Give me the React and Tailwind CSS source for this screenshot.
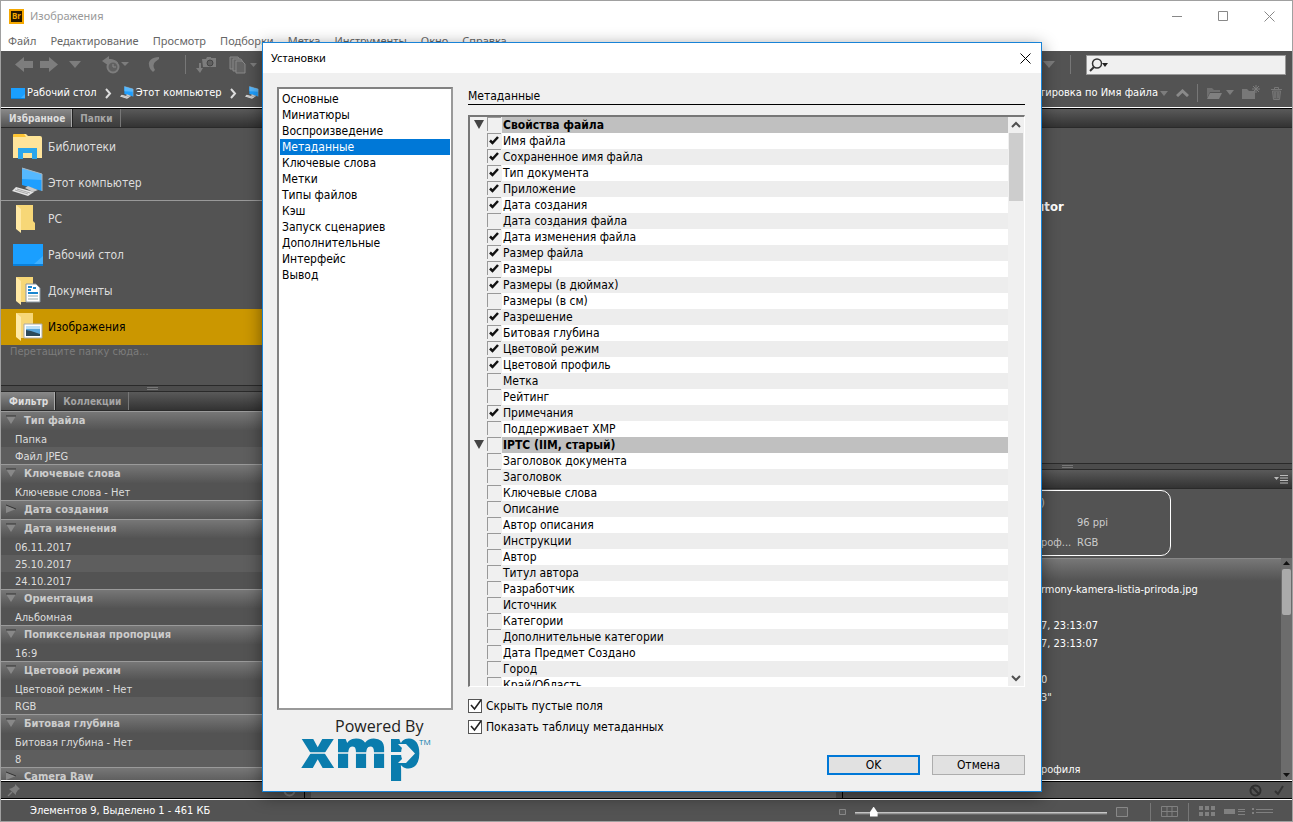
import React, { useState } from "react";

const menu = ["Файл", "Редактирование", "Просмотр", "Подборки", "Метка", "Инструменты", "Окно", "Справка"];

const filters = [
  { title: "Тип файла", open: true, items: ["Папка", "Файл JPEG"] },
  { title: "Ключевые слова", open: true, items: ["Ключевые слова - Нет"] },
  { title: "Дата создания", open: false, items: [] },
  { title: "Дата изменения", open: true, items: ["06.11.2017", "25.10.2017", "24.10.2017"] },
  { title: "Ориентация", open: true, items: ["Альбомная"] },
  { title: "Попиксельная пропорция", open: true, items: ["16:9"] },
  { title: "Цветовой режим", open: true, items: ["Цветовой режим - Нет", "RGB"] },
  { title: "Битовая глубина", open: true, items: ["Битовая глубина - Нет", "8"] },
  { title: "Camera Raw", open: false, items: [] },
];

const sections = [
  "Основные",
  "Миниатюры",
  "Воспроизведение",
  "Метаданные",
  "Ключевые слова",
  "Метки",
  "Типы файлов",
  "Кэш",
  "Запуск сценариев",
  "Дополнительные",
  "Интерфейс",
  "Вывод",
];

const fields = [
  { name: "Свойства файла", head: true },
  { name: "Имя файла", on: true },
  { name: "Сохраненное имя файла", on: true },
  { name: "Тип документа", on: true },
  { name: "Приложение", on: true },
  { name: "Дата создания", on: true },
  { name: "Дата создания файла" },
  { name: "Дата изменения файла", on: true },
  { name: "Размер файла", on: true },
  { name: "Размеры", on: true },
  { name: "Размеры (в дюймах)", on: true },
  { name: "Размеры (в см)" },
  { name: "Разрешение", on: true },
  { name: "Битовая глубина", on: true },
  { name: "Цветовой режим", on: true },
  { name: "Цветовой профиль", on: true },
  { name: "Метка" },
  { name: "Рейтинг" },
  { name: "Примечания", on: true },
  { name: "Поддерживает XMP" },
  { name: "IPTC (IIM, старый)", head: true },
  { name: "Заголовок документа" },
  { name: "Заголовок" },
  { name: "Ключевые слова" },
  { name: "Описание" },
  { name: "Автор описания" },
  { name: "Инструкции" },
  { name: "Автор" },
  { name: "Титул автора" },
  { name: "Разработчик" },
  { name: "Источник" },
  { name: "Категории" },
  { name: "Дополнительные категории" },
  { name: "Дата Предмет Создано" },
  { name: "Город" },
  { name: "Край/Область" },
];

// empty strings are blank rows in the properties list
const props = ["rmony-kamera-listia-priroda.jpg", "", "7, 23:13:07", "7, 23:13:07", "", "0", '3"', "", "", "", "рофиля"];

/* ---------- icons ---------- */

function Down({ className }) {
  return (
    <svg className={className} width="12" height="7" viewBox="0 0 12 7">
      <path d="M0 0h12L6 7z" fill="#7d7d7d" />
    </svg>
  );
}

function SmallDown() {
  return (
    <svg width="8" height="5" viewBox="0 0 8 5">
      <path d="M0 0h8L4 5z" fill="#7d7d7d" />
    </svg>
  );
}

function Chevron() {
  return (
    <svg width="7" height="11" viewBox="0 0 7 11">
      <path d="M1 1l4 4.5L1 10" fill="none" stroke="#ddd" strokeWidth="2" />
    </svg>
  );
}

function Monitor({ size }) {
  return (
    <svg width={size} height={size} viewBox="0 0 32 32">
      <path d="M10 1l20 6v17l-20-6z" fill="#1e9fff" />
      <path d="M10 1l20 6v6L10 12z" fill="#55b8ff" />
      <path d="M10 1l20 6v17" fill="none" stroke="#a9b5bd" />
      <path d="M16 19l10 4-5 2-8-4z" fill="#c9c9c9" />
      <path d="M4 20l18 5-6 4L0 24z" fill="#e4e4e4" />
      <path d="M5 22l13 4M3 23l13 4" stroke="#aaa" fill="none" />
    </svg>
  );
}

function Folder({ children }) {
  return (
    <svg width="32" height="32" viewBox="0 0 32 32">
      <path d="M4 2h17v16l2 2v7H9z" fill="#f7d777" />
      <path d="M4 2l5 4v24l-5-4z" fill="#ffe9a4" />
      {children}
    </svg>
  );
}

function Libraries() {
  return (
    <svg width="32" height="32" viewBox="0 0 32 32">
      <path d="M1 4a2 2 0 012-1h11l2 2h12a2 2 0 012 2v18H1z" fill="#ffe698" />
      <path d="M1 4a2 2 0 012-1h9l2 3H1z" fill="#ffc533" />
      <path d="M1 8h29v19H1z" fill="#ffe49b" />
      <path d="M6 17h19v11h-5v-6h-9v6H6z" fill="#2ba6ec" />
    </svg>
  );
}

function Desktop({ className }) {
  return (
    <svg className={className} viewBox="0 0 30 22" preserveAspectRatio="none">
      <rect width="30" height="22" fill="#1a9fff" />
      <path d="M0 21h30" stroke="#0b7fd8" strokeWidth="2" />
      <path d="M30 12v8H21z" fill="#3fb0ff" />
    </svg>
  );
}

const favourites = [
  { name: "Библиотеки", icon: <Libraries /> },
  { name: "Этот компьютер", icon: <Monitor size={32} /> },
  { name: "PC", icon: <Folder /> },
  { name: "Рабочий стол", icon: <Desktop className="h-[22px] w-[30px]" /> },
  {
    name: "Документы",
    icon: (
      <Folder>
        <path d="M14 9h10l4 4v14H14z" fill="#fff" stroke="#8b98a3" />
        <path d="M16 15h3M21 13h3M16 18h10M16 12h4" stroke="#1a86d0" strokeWidth="2" />
        <path d="M16 21h10M16 24h10" stroke="#9aa" />
      </Folder>
    ),
  },
  {
    name: "Изображения",
    icon: (
      <Folder>
        <path d="M12 13h18v14H12z" fill="#fff" stroke="#aaa" />
        <path d="M14 15h14v10H14z" fill="#5aa7dd" />
        <path d="M14 15h14v3H14z" fill="#bfe0f5" />
        <path d="M14 19l5 1 9 3v2H14z" fill="#2c4a5c" />
      </Folder>
    ),
  },
];

/* ---------- shared bits ---------- */

function Strip({ children }) {
  return (
    <div className="flex h-[19px] shrink-0 border-b border-[#2a2a2a] bg-linear-to-b from-[#5a5a5a] to-[#333]">{children}</div>
  );
}

function Tab({ children, active }) {
  return (
    <button
      className={
        active
          ? "border-r border-[#aaa] bg-linear-to-b from-[#8a8a8a] to-[#545454] pr-[6px] pl-2 text-[10px] font-bold text-[#ddd]"
          : "border-r border-l border-r-[#777] border-l-[#222] bg-linear-to-b from-[#555] to-[#3c3c3c] px-[7px] text-[10px] font-bold text-[#a5a5a5]"
      }
    >
      {children}
    </button>
  );
}

function Splitter() {
  return (
    <div className="flex h-[7px] shrink-0 items-center justify-center border-y border-[#2a2a2a] bg-[#4c4c4c]">
      <span className="h-[3px] w-[11px] border-y border-[#777]" />
    </div>
  );
}

function FilterGroup({ group }) {
  const [open, setOpen] = useState(group.open);
  return (
    <div>
      <button
        onClick={() => setOpen(!open)}
        className="flex h-[19px] w-full items-center border-t border-[#9a9a9a] bg-linear-to-b from-[#777] to-[#545454] pt-px pl-[5px] text-[11px] font-bold text-[#ccc]"
      >
        <svg width="10" height="10" viewBox="0 0 10 10" className="mr-2 mb-1">
          {open ? (
            <>
              <path d="M0 1h10L5 9z" fill="#888" />
              <path d="M0 1h10" stroke="#333" />
            </>
          ) : (
            <>
              <path d="M0 1l10 4-10 4z" fill="#888" />
              <path d="M0 1l10 4" stroke="#333" />
            </>
          )}
        </svg>
        {group.title}
      </button>
      {open &&
        group.items.map((item, i) => (
          <div
            key={item}
            className={`h-[17px] pt-px pl-[14px] text-[11px] leading-[17px] text-[#ddd] ${i % 2 ? "bg-[#5e5e5e]" : "bg-[#535353]"}`}
          >
            {item}
          </div>
        ))}
    </div>
  );
}

function FieldRow({ field, index }) {
  let bg = index % 2 ? "bg-white" : "bg-[#ededed]";
  if (field.head) bg = "bg-[#c0c0c0] font-bold";
  return (
    <label className="flex h-4">
      <span className="flex w-[17px] shrink-0 justify-center pt-[3px]">
        {field.head && (
          <svg width="10" height="9" viewBox="0 0 10 9">
            <path d="M0 0h10L5 9z" fill="#444" />
          </svg>
        )}
      </span>
      <span className="grid w-[15px] shrink-0">
        <input
          type="checkbox"
          defaultChecked={field.on}
          className="peer col-start-1 row-start-1 h-[14px] w-[14px] appearance-none border-t border-l border-[#999] bg-[#f0f0f0]"
        />
        <svg
          className="pointer-events-none col-start-1 row-start-1 hidden peer-checked:block"
          width="14"
          height="14"
          viewBox="0 0 14 14"
        >
          <path d="M3 7.500l2.500 2.500L11 4" fill="none" stroke="#111" strokeWidth="2.500" />
        </svg>
      </span>
      <span className={`flex-1 pl-px leading-4 whitespace-nowrap ${bg}`}>{field.name}</span>
    </label>
  );
}

function Option({ children }) {
  return (
    <label className="flex h-[21px] items-center gap-1">
      <span className="grid">
        <input
          type="checkbox"
          defaultChecked
          className="peer col-start-1 row-start-1 h-[14px] w-[14px] appearance-none border border-[#555] bg-white"
        />
        <svg
          className="pointer-events-none col-start-1 row-start-1 hidden overflow-visible peer-checked:block"
          width="14"
          height="14"
          viewBox="0 0 14 14"
        >
          <path d="M3 6l3.500 4L13 1" fill="none" stroke="#222" strokeWidth="1.600" />
        </svg>
      </span>
      {children}
    </label>
  );
}

/* ---------- preferences window ---------- */

function Preferences() {
  const [section, setSection] = useState("Метаданные");

  return (
    <div
      role="dialog"
      aria-label="Установки"
      className="absolute top-[41px] left-[261px] flex h-[750px] w-[780px] flex-col border border-[#1883d7] bg-[#f0f0f0] text-xs text-black shadow-[0_4px_16px_rgba(0,0,0,0.45)]"
    >
      <div className="flex h-[30px] shrink-0 items-center justify-between bg-white pr-[10px] pl-2 font-['Noto_Sans',sans-serif] text-[11px]">
        <span>Установки</span>
        <button aria-label="Закрыть">
          <svg width="11" height="11" viewBox="0 0 11 11">
            <path d="M.5.5l10 10M10.500.5l-10 10" stroke="#000" fill="none" />
          </svg>
        </button>
      </div>

      <div className="flex min-h-0 flex-1 gap-[15px] pt-[14px] pr-4 pb-4 pl-[14px]">
        <div className="flex w-[176px] shrink-0 flex-col">
          <ul className="h-[623px] shrink-0 border-2 border-[#828282] border-r-[#999] border-b-[#999] bg-white px-px pt-[2px]">
            {sections.map((s) => (
              <li key={s}>
                <button
                  onClick={() => setSection(s)}
                  className={`block h-4 w-full pl-[2px] text-left leading-4 ${s === section ? "bg-[#0078d7] text-white" : ""}`}
                >
                  {s}
                </button>
              </li>
            ))}
          </ul>
          <svg className="mt-1 ml-6 shrink-0 overflow-visible" width="130" height="60" viewBox="0 0 130 60">
            <text x="34" y="18" fontFamily="Open Sans, sans-serif" fontSize="16" fill="#222">
              Powered By
            </text>
            <text x="0" y="54" fontFamily="Open Sans, sans-serif" fontWeight="800" fontSize="53" fill="#0a7cad">
              xmp
            </text>
            <path d="M0 39h88" stroke="#f0f0f0" strokeWidth="1.500" />
            <path d="M87 38h18l-8-8h8l9 9.500-9 9.500h-8l8-8H87z" fill="#f0f0f0" />
            <text x="118" y="31" fontFamily="Open Sans, sans-serif" fontSize="8" fill="#0a7cad">
              TM
            </text>
          </svg>
        </div>

        <div className="flex min-w-0 flex-1 flex-col">
          <h2 className="h-[18px] border-b border-black pt-px leading-4">{section}</h2>
          <div className="mt-[10px] flex h-[572px] shrink-0 overflow-hidden border-t-2 border-l-2 border-r border-b border-t-[#777] border-r-white border-b-white border-l-[#777]">
            <div className="min-w-0 flex-1">
              {fields.map((f, i) => (
                <FieldRow key={i} field={f} index={i} />
              ))}
            </div>
            <div className="flex w-4 shrink-0 flex-col items-center">
              <svg className="shrink-0" width="16" height="16" viewBox="0 0 16 16">
                <path d="M4 10l4-4 4 4" fill="none" stroke="#505050" strokeWidth="2" />
              </svg>
              <span className="h-[68px] w-[14px] bg-[#cdcdcd]" />
              <svg className="mt-auto shrink-0" width="16" height="16" viewBox="0 0 16 16">
                <path d="M4 6l4 4 4-4" fill="none" stroke="#505050" strokeWidth="2" />
              </svg>
            </div>
          </div>
          <div className="mt-2">
            <Option>Скрыть пустые поля</Option>
            <Option>Показать таблицу метаданных</Option>
          </div>
          <div className="mt-auto flex justify-end gap-3">
            <button className="h-5 w-[93px] border-2 border-[#0078d7] bg-[#e1e1e1] leading-4">OK</button>
            <button className="h-5 w-[93px] border border-[#adadad] bg-[#e1e1e1] leading-4">Отмена</button>
          </div>
        </div>
      </div>
    </div>
  );
}

/* ---------- main window ---------- */

function Header() {
  return (
    <header className="bg-white font-['Noto_Sans',sans-serif] text-[11px]">
      <div className="flex h-[30px] items-center pr-[17px] pl-2 text-[#999]">
        <span className="mr-[6px] flex h-[15px] w-[15px] items-center justify-center border-2 border-[#f5a800] bg-[#261a00] text-[8px] font-bold text-[#f5a800]">
          Br
        </span>
        <span className="flex-1">Изображения</span>
        <button aria-label="Свернуть">
          <svg width="10" height="10" viewBox="0 0 10 10">
            <path d="M0 5.500h10" stroke="#888" />
          </svg>
        </button>
        <button aria-label="Развернуть" className="mx-9">
          <svg width="10" height="10" viewBox="0 0 10 10">
            <path d="M.5.5h9v9h-9z" fill="none" stroke="#888" />
          </svg>
        </button>
        <button aria-label="Закрыть">
          <svg width="11" height="11" viewBox="0 0 11 11">
            <path d="M.5.5l10 10M10.500.5l-10 10" stroke="#888" fill="none" />
          </svg>
        </button>
      </div>
      <nav className="flex h-5 items-center gap-[14px] pl-[7px] text-[#666]">
        {menu.map((m) => (
          <button key={m}>{m}</button>
        ))}
      </nav>
    </header>
  );
}

function Toolbar() {
  return (
    <div className="shrink-0 border-b border-black">
      <div className="flex h-[27px] items-center pr-[6px] pl-[14px]">
        <svg width="18" height="15" viewBox="0 0 18 15">
          <path d="M0 7.500L9 0v4h9v7H9v4z" fill="#7d7d7d" />
        </svg>
        <svg className="ml-[7px]" width="18" height="15" viewBox="0 0 18 15">
          <path d="M18 7.500L9 0v4H0v7h9v4z" fill="#7d7d7d" />
        </svg>
        <Down className="ml-[11px]" />
        <svg className="ml-[21px]" width="27" height="18" viewBox="0 0 27 18">
          <path d="M0 5l7-5v3c5 0 8 2 9 4l-3 1c-2-2-4-2-6-1v3z" fill="#7d7d7d" />
          <circle cx="11" cy="11" r="5.500" fill="#606060" stroke="#7d7d7d" strokeWidth="2" />
          <path d="M11 8v3h3" stroke="#8a8a8a" fill="none" />
          <path d="M19 6h8l-4 4z" fill="#7d7d7d" />
        </svg>
        <svg className="ml-[19px]" width="12" height="17" viewBox="0 0 12 17">
          <path d="M11 1C4 1 0 5 1 9c0 3 2 5 4 7l2-2C5 11 5 8 7 6l4-3z" fill="#7d7d7d" />
        </svg>
        <span className="mr-[10px] ml-[25px] h-[19px] w-px bg-[#777]" />
        <svg width="21" height="17" viewBox="0 0 21 17">
          <path d="M3 7h2v5h2l-3 5-4-5h3z" fill="#7d7d7d" />
          <path d="M6 3h4l1-2h4v1h5v9H7z" fill="#7d7d7d" />
          <circle cx="14" cy="7" r="3" fill="#606060" stroke="#444" />
        </svg>
        <svg className="ml-3" width="29" height="18" viewBox="0 0 29 18">
          <path d="M1 1h8l2 3v9H1z" fill="#646464" stroke="#888" />
          <path d="M4 3h8l2 3v9H4z" fill="#646464" stroke="#888" />
          <path d="M7 5h6l3 3v9H7z" fill="#646464" stroke="#888" />
          <path d="M21 7h7l-3.500 4z" fill="#7d7d7d" />
        </svg>
        <span className="flex-1" />
        <Down />
        <span className="mx-[15px] h-[19px] w-px bg-[#777]" />
        <label className="flex h-5 w-[200px] items-center border border-[#999] bg-[#f0f0f0] pl-[2px]">
          <svg width="20" height="14" viewBox="0 0 20 14">
            <circle cx="8" cy="5.500" r="4.500" fill="none" stroke="#333" strokeWidth="1.500" />
            <path d="M5 9l-4 4" stroke="#333" strokeWidth="2" />
            <path d="M13 5h6l-3 4z" fill="#222" />
          </svg>
          <input type="text" aria-label="Поиск" className="min-w-0 flex-1 outline-none" />
        </label>
      </div>

      <div className="flex h-[30px] items-center border-b border-white px-[10px] pt-px text-[11px] text-white">
        <Desktop className="h-[11px] w-[14px]" />
        <span className="ml-[2px]">Рабочий стол</span>
        <span className="mr-2 ml-2">
          <Chevron />
        </span>
        <Monitor size={14} />
        <span className="ml-[2px]">Этот компьютер</span>
        <span className="mr-2 ml-2">
          <Chevron />
        </span>
        <Monitor size={14} />
        <span className="flex-1" />
        <button className="mr-[2px]">Сортировка по Имя файла</button>
        <SmallDown />
        <svg className="mx-2" width="13" height="8" viewBox="0 0 13 8">
          <path d="M1 7l5.500-5L12 7" fill="none" stroke="#8a8a8a" strokeWidth="3" />
        </svg>
        <span className="mr-2 h-[18px] w-px bg-[#777]" />
        <svg width="28" height="14" viewBox="0 0 28 14">
          <path d="M1 12V2h5l2 2h6v2H4z" fill="#6f6f6f" />
          <path d="M4 7h12l-3 6H1z" fill="#808080" />
          <path d="M20 4h8l-4 5z" fill="#7d7d7d" />
        </svg>
        <svg className="ml-2" width="18" height="16" viewBox="0 0 18 16">
          <path d="M0 14V4h5l2 2h6v8z" fill="#787878" />
          <path d="M14 0v8M10 4h8M11 1l6 6M17 1l-6 6" stroke="#7d7d7d" />
        </svg>
        <svg className="ml-[11px]" width="11" height="13" viewBox="0 0 11 13">
          <path d="M0 2.500h11M3.500 2V.5h4V2" stroke="#777" fill="none" />
          <path d="M1.500 4h8l-1 8.500h-6z" fill="#606060" stroke="#777" />
          <path d="M4 5v6M7 5v6" stroke="#7d7d7d" />
        </svg>
      </div>
    </div>
  );
}

function LeftPanel() {
  return (
    <div className="flex w-[304px] shrink-0 flex-col border-r border-[#222]">
      <Strip>
        <Tab active>Избранное</Tab>
        <Tab>Папки</Tab>
      </Strip>
      <div className="min-h-0 flex-1 overflow-hidden pt-px text-xs text-[#ddd]">
        {favourites.map((f, i) => (
          <a
            key={f.name}
            href="#"
            className={`flex h-9 items-center gap-1 pl-[11px] ${i === 1 ? "border-b border-[#999]" : ""} ${
              i === 5 ? "bg-[#cb9700] text-black" : ""
            }`}
          >
            <span className="flex w-8 justify-center">{f.icon}</span>
            {f.name}
          </a>
        ))}
        <p className="pl-[9px] text-[11px] leading-[14px] text-[#7c7c7c]">Перетащите папку сюда...</p>
      </div>
      <Splitter />
      <Strip>
        <Tab active>Фильтр</Tab>
        <Tab>Коллекции</Tab>
      </Strip>
      <div className="h-[369px] shrink-0 overflow-hidden">
        {filters.map((g) => (
          <FilterGroup key={g.title} group={g} />
        ))}
      </div>
    </div>
  );
}

function RightPanel() {
  return (
    <div className="flex w-[450px] shrink-0 flex-col border-l border-[#222]">
      <Strip />
      <div className="flex-1 pt-[69px] pl-[193px] text-[13px] font-bold text-white">utor</div>
      <Splitter />
      <Strip>
        <svg className="mt-[5px] mr-1 ml-auto" width="14" height="9" viewBox="0 0 14 9">
          <path d="M0 2h5L2.500 5z" fill="#bbb" />
          <path d="M6 .5h8M6 3h8M6 5.500h8M6 8h8" stroke="#bbb" />
        </svg>
      </Strip>
      <div className="h-[69px] shrink-0 pt-px pl-1 text-[11px] text-[#ccc]">
        <div className="grid h-[66px] w-[324px] grid-cols-[193px_36px_1fr] content-center rounded-[10px] border border-white leading-5">
          <span className="col-start-2 row-start-1">)</span>
          <span className="col-start-3 row-start-2">96 ppi</span>
          <span className="col-start-2 row-start-3">роф...</span>
          <span className="col-start-3 row-start-3">RGB</span>
        </div>
      </div>
      <div className="flex h-[222px] shrink-0">
        <div className="flex-1 border-t border-[#888]">
          <div className="h-[22px] bg-linear-to-b from-[#777] to-[#535353]" />
          {props.map((p, i) => (
            <div key={i} className="h-[18px] pl-[198px] text-[11px] leading-[18px] text-white">
              {p}
            </div>
          ))}
        </div>
        <div className="flex w-[11px] flex-col items-center bg-[#6c6c6c]">
          <svg className="mt-[3px]" width="7" height="4" viewBox="0 0 7 4">
            <path d="M0 4h7L3.500 0z" fill="#111" />
          </svg>
          <span className="mt-1 h-[46px] w-[9px] rounded-[2px] bg-[#aaa]" />
          <svg className="mt-auto mb-[3px]" width="7" height="4" viewBox="0 0 7 4">
            <path d="M0 0h7L3.500 4z" fill="#111" />
          </svg>
        </div>
      </div>
    </div>
  );
}

function BottomBar() {
  return (
    <>
      <div className="flex h-[19px] shrink-0 items-center border-t border-b border-t-white border-b-black">
        <div className="flex h-full w-[304px] items-center justify-between border-t border-r border-black pr-2 pl-[6px]">
          <svg width="13" height="13" viewBox="0 0 13 13">
            <path d="M8 0l5 5-2 1-2 3v2L2 5l3-1 3-2z" fill="#7d7d7d" />
            <path d="M5 8l-4 4" stroke="#7d7d7d" strokeWidth="1.500" />
          </svg>
          <svg width="13" height="13" viewBox="0 0 13 13">
            <circle cx="6.500" cy="6.500" r="5" fill="none" stroke="#7d7d7d" strokeWidth="2" />
          </svg>
        </div>
        <div className="h-full flex-1 border-t border-black px-[6px]">
          <div className="h-full bg-[#6c6c6c]" />
        </div>
        <div className="flex h-full w-[450px] items-center justify-end gap-3 border-t border-l border-black pr-2">
          <svg width="13" height="13" viewBox="0 0 13 13">
            <circle cx="6.500" cy="6.500" r="5" fill="none" stroke="#2e2e2e" strokeWidth="2" />
            <path d="M3 3l7 7" stroke="#2e2e2e" strokeWidth="2" />
          </svg>
          <svg width="10" height="11" viewBox="0 0 10 11">
            <path d="M1 6l3 3 5-8" fill="none" stroke="#333" strokeWidth="2" />
          </svg>
        </div>
      </div>
      <footer className="flex h-[22px] shrink-0 items-center border-t border-white pt-[2px] pr-[18px] pl-[29px] text-[11px] text-white">
        <span className="flex-1">Элементов 9, Выделено 1 - 461 КБ</span>
        <svg width="7" height="6" viewBox="0 0 7 6">
          <path d="M.5.5h6v5h-6z" fill="#5c5c5c" stroke="#888" />
        </svg>
        <input
          type="range"
          aria-label="Размер миниатюр"
          defaultValue="6"
          className="mx-[9px] h-3 w-[252px] appearance-none bg-linear-to-b from-transparent from-50% via-[#ddd] via-50% to-transparent to-75% [&::-webkit-slider-thumb]:h-[10px] [&::-webkit-slider-thumb]:w-2 [&::-webkit-slider-thumb]:appearance-none [&::-webkit-slider-thumb]:bg-white [&::-webkit-slider-thumb]:[clip-path:polygon(50%_0,100%_60%,100%_100%,0_100%,0_60%)]"
        />
        <svg width="12" height="10" viewBox="0 0 12 10">
          <path d="M.5.5h11v9H.5z" fill="#5c5c5c" stroke="#888" />
        </svg>
        <span className="mr-[10px] ml-[22px] h-[18px] w-px bg-[#777]" />
        <svg width="17" height="11" viewBox="0 0 17 11">
          <path d="M.5.5h16v10H.5zM6 0v11M11 0v11M0 5.500h17" fill="none" stroke="#808080" />
        </svg>
        <span className="mx-[10px] h-[18px] w-px bg-[#777]" />
        <svg width="75" height="11" viewBox="0 0 75 11">
          <path d="M0 0h4v4H0zM6 0h4v4H6zM12 0h4v4h-4zM0 6h4v4H0zM6 6h4v4H6zM12 6h4v4h-4z" fill="#808080" />
          <path d="M25 3h11v5H25z" fill="#808080" />
          <path d="M39 3.500h7M39 5.500h7M39 8.500h7" stroke="#808080" />
          <path d="M53 2h2v2h-2zM53 6h2v2h-2z" fill="#808080" />
          <path d="M57 3.500h17M57 6.500h17" stroke="#808080" />
        </svg>
      </footer>
    </>
  );
}

export default function App() {
  return (
    <div className="relative flex h-screen min-h-[822px] flex-col overflow-hidden border border-[#a0a0a0] bg-[#535353] font-['DejaVu_Sans_Condensed','DejaVu_Sans',sans-serif]">
      <Header />
      <Toolbar />
      <main className="flex min-h-0 flex-1">
        <LeftPanel />
        <div className="flex-1 bg-[#535353]" />
        <RightPanel />
      </main>
      <BottomBar />
      <Preferences />
    </div>
  );
}
